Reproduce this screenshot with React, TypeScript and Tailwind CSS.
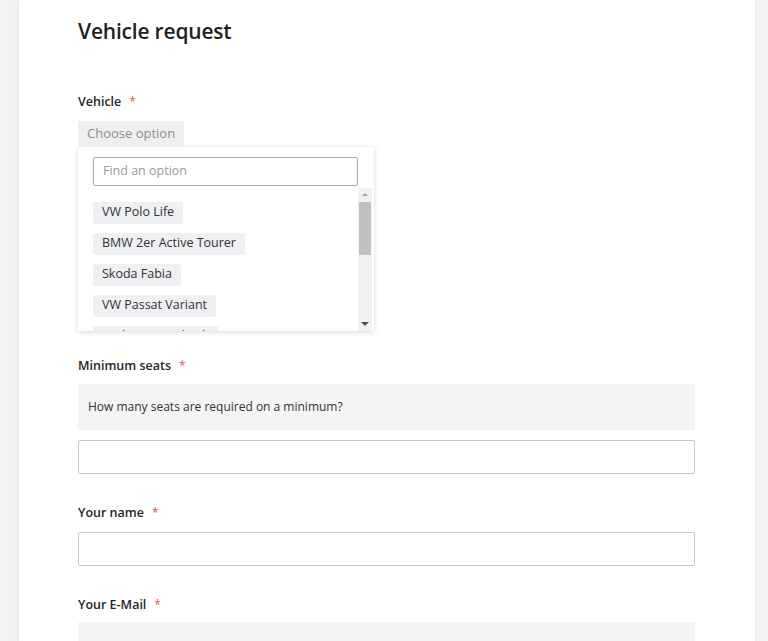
import React from "react";

const font = { fontFamily: '"Open Sans", "Noto Sans", Arial, sans-serif' };

function Label({ children }: { children: React.ReactNode }) {
  return (
    <div className="flex items-center h-[16px] text-[12.5px] font-semibold text-[#252525] leading-[16px]">
      <span>{children}</span>
      <span className="ml-[8px] text-[#e0584f] font-normal text-[12px]">*</span>
    </div>
  );
}

const chips = ["VW Polo Life", "BMW 2er Active Tourer", "Skoda Fabia", "VW Passat Variant", "Audi A3 Sportback"];

export default function App() {
  return (
    <div className="min-h-[641px] h-[641px] overflow-hidden bg-[#f3f3f3]" style={font}>
      <div className="ml-[19px] w-[736px] h-full bg-white shadow-[0_0_6px_rgba(0,0,0,0.06)] pl-[59px] pr-[60px] pt-[16px]">
        <h1 className="text-[21px] leading-[30px] font-semibold text-[#1f1f1f] tracking-[-0.2px]">Vehicle request</h1>

        <div className="mt-[48px]">
          <Label>Vehicle</Label>
        </div>
        <div className="mt-[10px]">
          <div className="inline-flex items-center h-[26px] px-[9px] bg-[#efefef] text-[13px] text-[#8c8c8c]">Choose option</div>
        </div>
        <div className="w-[296px] h-[184px] bg-white shadow-[0_1px_5px_rgba(0,0,0,0.16)] flex flex-col">
          <div className="pt-[10px] pl-[15px] pr-[16px]">
            <div className="h-[29px] border border-[#a9a9a9] rounded-[2px] flex items-center px-[9px] text-[12.5px] text-[#9a9a9a]">Find an option</div>
          </div>
          <div className="flex flex-1 mt-[2px] overflow-hidden">
            <div className="flex-1 pl-[15px] pt-[14px] flex flex-col gap-[9px] overflow-hidden">
              {chips.map((c) => (
                <div key={c} className="self-start h-[22px] shrink-0 px-[9px] flex items-center bg-[#eef0f3] rounded-[2px] text-[12.5px] text-[#333]">
                  {c}
                </div>
              ))}
            </div>
            <div className="w-[14px] mr-[2px] bg-[#f1f1f1] flex flex-col items-center">
              <div className="h-[14px] flex items-center justify-center">
                <div className="w-0 h-0 border-l-[3px] border-r-[3px] border-b-[3px] border-l-transparent border-r-transparent border-b-[#a3a3a3]" />
              </div>
              <div className="w-[12px] h-[53px] bg-[#c1c1c1]" />
              <div className="flex-1" />
              <div className="h-[14px] flex items-center justify-center">
                <div className="w-0 h-0 border-l-[4px] border-r-[4px] border-t-[4px] border-l-transparent border-r-transparent border-t-[#505050]" />
              </div>
            </div>
          </div>
        </div>

        <div className="mt-[27px]">
          <Label>Minimum seats</Label>
        </div>
        <div className="mt-[10px] h-[46px] bg-[#f4f4f4] flex items-center px-[10px] text-[12px] text-[#333]">
          How many seats are required on a minimum?
        </div>
        <div className="mt-[10px] h-[34px] border border-[#c8c8c8] rounded-[2px] bg-white" />

        <div className="mt-[31px]">
          <Label>Your name</Label>
        </div>
        <div className="mt-[11px] h-[34px] border border-[#c8c8c8] rounded-[2px] bg-white" />

        <div className="mt-[31px]">
          <Label>Your E-Mail</Label>
        </div>
        <div className="mt-[9px] h-[34px] bg-[#f4f4f4] rounded-[2px]" />
      </div>
    </div>
  );
}
